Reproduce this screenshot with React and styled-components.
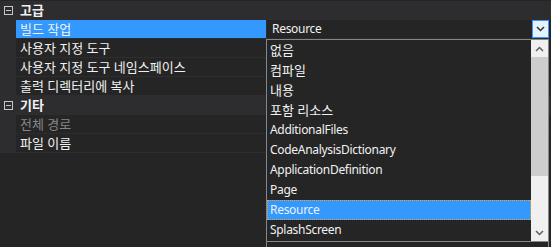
import React from "react";
import styled, { createGlobalStyle } from "styled-components";

const Global = createGlobalStyle`
  html, body {
    margin: 0;
    padding: 0;
    background: #252526;
  }
  body {
    font-family: "Noto Sans", "Noto Sans CJK KR", sans-serif;
    font-size: 12px;
    color: #f1f1f1;
  }
`;

const Wrapper = styled.div`
  position: relative;
  width: 551px;
  height: 247px;
  overflow: hidden;
  background: #252526;
  padding-top: 1px;
  box-sizing: border-box;
`;

const Row = styled.div`
  display: flex;
  height: 18px;
  border-bottom: 1px solid #2d2d30;
  background: ${(p) => (p.$category ? "#2d2d30" : "#252526")};
`;

const Margin = styled.div`
  width: 16px;
  flex: none;
  background: #2d2d30;
  display: flex;
  align-items: center;
  justify-content: center;
`;

const Expander = styled.div`
  width: 7px;
  height: 7px;
  border: 1px solid #c8c8c8;
  position: relative;
  &::after {
    content: "";
    position: absolute;
    left: 1px;
    right: 1px;
    top: 3px;
    height: 1px;
    background: #c8c8c8;
  }
`;

const Name = styled.div`
  width: 246px;
  flex: none;
  padding-left: 4px;
  display: flex;
  align-items: center;
  white-space: nowrap;
  font-size: 13px;
  line-height: 18px;
  background: ${(p) => (p.$selected ? "#3399ff" : "transparent")};
  color: ${(p) => (p.$disabled ? "#858585" : "#f1f1f1")};
  font-weight: ${(p) => (p.$category ? "bold" : "normal")};
`;

const Value = styled.div`
  flex: 1;
  display: flex;
  align-items: center;
  border-left: ${(p) => (p.$category ? "none" : "1px solid #2d2d30")};
`;

const Combo = styled.div`
  flex: 1;
  height: 18px;
  display: flex;
  align-items: center;
  background: #252526;
  margin-right: 2px;
`;

const ComboText = styled.span`
  flex: 1;
  padding-left: 5px;
  letter-spacing: -0.3px;
  line-height: 18px;
`;

const ComboButton = styled.div`
  width: 15px;
  height: 16px;
  border: 1px solid #3399ff;
  background: #e5f1fb;
  display: flex;
  align-items: center;
  justify-content: center;
`;

const Popup = styled.div`
  position: absolute;
  left: 266px;
  top: 39px;
  width: 283px;
  height: 215px;
  border: 1px solid #828790;
  box-sizing: border-box;
  background: #252526;
  display: flex;
  flex-direction: column;
`;

const ListArea = styled.div`
  display: flex;
  height: 202px;
  border-bottom: 1px solid #828790;
`;

const Items = styled.div`
  flex: 1;
  display: flex;
  flex-direction: column;
`;

const Item = styled.div`
  height: 20px;
  line-height: 20px;
  padding-left: 3px;
  white-space: nowrap;
  box-sizing: border-box;
  font-size: ${(p) => (p.$korean ? "13px" : "12px")};
  letter-spacing: ${(p) => (p.$korean ? "0" : "-0.3px")};
  background: ${(p) => (p.$active ? "#3399ff" : "transparent")};
  outline: ${(p) => (p.$active ? "1px dotted #f0a030" : "none")};
  outline-offset: -1px;
`;

const ScrollBar = styled.div`
  width: 17px;
  flex: none;
  background: #f0f0f0;
  display: flex;
  flex-direction: column;
`;

const Arrow = styled.div`
  height: 17px;
  display: flex;
  align-items: center;
  justify-content: center;
`;

const Track = styled.div`
  flex: 1;
  display: flex;
  flex-direction: column;
`;

const Thumb = styled.div`
  height: 119px;
  background: #cdcdcd;
`;

const Grip = styled.div`
  height: 10px;
  padding-left: 2px;
  padding-top: 1px;
`;

const Chevron = ({ up, color = "#1e1e1e" }) => (
  <svg width="9" height="6" viewBox="0 0 9 6">
    <path
      d={up ? "M1 5 L4.5 1.5 L8 5" : "M1 1 L4.5 4.5 L8 1"}
      fill="none"
      stroke={color}
      strokeWidth="1.5"
    />
  </svg>
);

const props = [
  { name: "고급", category: true },
  { name: "빌드 작업", selected: true },
  { name: "사용자 지정 도구" },
  { name: "사용자 지정 도구 네임스페이스" },
  { name: "출력 디렉터리에 복사" },
  { name: "기타", category: true },
  { name: "전체 경로", disabled: true },
  { name: "파일 이름" },
];

const options = [
  "없음",
  "컴파일",
  "내용",
  "포함 리소스",
  "AdditionalFiles",
  "CodeAnalysisDictionary",
  "ApplicationDefinition",
  "Page",
  "Resource",
  "SplashScreen",
];

const isKorean = (s) => /[\uac00-\ud7a3]/.test(s);

export default function App() {
  return (
    <Wrapper>
      <Global />
      {props.map((p) => (
        <Row key={p.name} $category={p.category}>
          <Margin>{p.category && <Expander />}</Margin>
          <Name
            $selected={p.selected}
            $disabled={p.disabled}
            $category={p.category}
          >
            {p.name}
          </Name>
          <Value $category={p.category}>
            {p.selected && (
              <Combo>
                <ComboText>Resource</ComboText>
                <ComboButton>
                  <Chevron color="#333" />
                </ComboButton>
              </Combo>
            )}
          </Value>
        </Row>
      ))}
      <Popup>
        <ListArea>
          <Items>
            {options.map((o) => (
              <Item key={o} $active={o === "Resource"} $korean={isKorean(o)}>
                {o}
              </Item>
            ))}
          </Items>
          <ScrollBar>
            <Arrow>
              <Chevron up color="#606060" />
            </Arrow>
            <Track>
              <Thumb />
            </Track>
            <Arrow>
              <Chevron color="#606060" />
            </Arrow>
          </ScrollBar>
        </ListArea>
        <Grip>
          <svg width="8" height="6" viewBox="0 0 8 6">
            <path d="M1 1 L5 5 M4 1 L7 4" stroke="#a0a0a0" strokeWidth="1" />
          </svg>
        </Grip>
      </Popup>
    </Wrapper>
  );
}
